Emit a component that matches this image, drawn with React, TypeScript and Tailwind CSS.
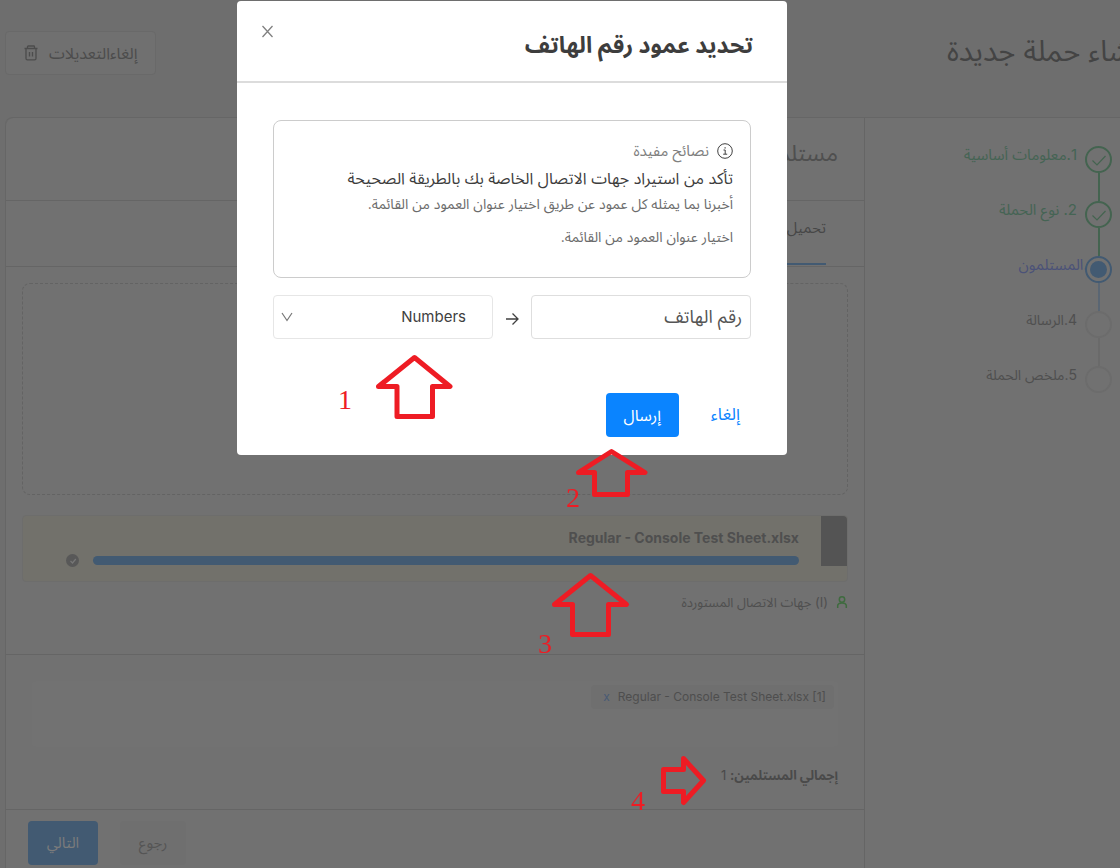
import { useState } from 'react';
import clsx from 'clsx';

const steps = [
  { label: '1.معلومات أساسية', status: 'done' },
  { label: '2. نوع الحملة', status: 'done' },
  { label: '3.المستلمون', status: 'current' },
  { label: '4.الرسالة', status: 'todo' },
  { label: '5.ملخص الحملة', status: 'todo' },
];

const TrashIcon = () => (
  <svg className="h-4 w-4" viewBox="0 0 16 16" fill="none" stroke="currentColor" strokeWidth="1.3">
    <path d="M1.5 3.5h13M4.5 3.5V1.8C4.5 1.3 4.8 1 5.3 1h5.400c.5 0 .8.3.8.8V3.500M3 3.500v9.900c0 .9.500 1.400 1.400 1.400h7.200c.9 0 1.400-.5 1.400-1.400V3.500M6.500 7v4.500M9.500 7v4.500" />
  </svg>
);

const UserIcon = () => (
  <svg className="h-3 w-3 text-[#3f6b3f]" viewBox="0 0 12 12" fill="none" stroke="currentColor" strokeWidth="1.5">
    <circle cx="6" cy="3.500" r="2.700" />
    <path d="M1.700 12V9.800C1.700 8.200 3.200 7 6 7s4.300 1.200 4.300 2.800V12" />
  </svg>
);

const InfoIcon = () => (
  <svg className="h-4 w-4 text-[#404040]" viewBox="0 0 16 16" fill="none" stroke="currentColor" strokeWidth="1">
    <circle cx="8" cy="8" r="7.300" />
    <path d="M6.500 7h1.700v4M6.200 11.200h4" />
    <path d="M7.500 4.800h1.200" strokeWidth="1.300" />
  </svg>
);

const StepCircle = ({ status }: { status: string }) => (
  <span
    className={clsx(
      'relative z-10 flex h-[27px] w-[27px] shrink-0 items-center justify-center rounded-full border-2 bg-[#717171]',
      status === 'done' && 'border-[#446450] text-[#446450]',
      status === 'current' && 'border-[#425a72]',
      status === 'todo' && 'border-[#6c6c6c]',
    )}
  >
    {status === 'done' && (
      <svg className="h-4 w-4" viewBox="0 0 16 16" fill="none" stroke="currentColor" strokeWidth="1.200">
        <path d="M1.500 8.500l4.500 4.500L14.500 4" />
      </svg>
    )}
    {status === 'current' && <span className="h-[17px] w-[17px] rounded-full bg-[#425a72]" />}
  </span>
);

const Stepper = () => (
  <ol className="pr-2 pt-7">
    {steps.map((step, i) => (
      <li key={step.label} className="flex gap-2">
        <div className="flex w-[27px] flex-col items-center">
          <StepCircle status={step.status} />
          {i < steps.length - 1 && (
            <span
              className={clsx(
                'h-7 w-[2px]',
                step.status === 'done' && 'bg-[#446450]',
                step.status === 'current' && 'bg-[#5a6673]',
                step.status === 'todo' && 'bg-[#6a6a6a]',
              )}
            />
          )}
        </div>
        <span
          className={clsx(
            'leading-[18px]',
            step.status === 'done' && 'text-[15px] text-[#456454]',
            step.status === 'current' && '-mr-5 text-[15px] text-[#4b5278]',
            step.status === 'todo' && 'text-[14px] text-[#4f4f4f]',
          )}
        >
          {step.label}
        </span>
      </li>
    ))}
  </ol>
);

const Recipients = () => (
  <main className="flex flex-1 flex-col rounded-tl-lg border-l border-[#666]">
    <div className="flex h-[83px] items-center border-b border-[#656565] px-[26px] pb-3">
      <h2 className="text-[23px] leading-8 text-[#4f4f4f]">مستلمو الحملة</h2>
    </div>

    <div className="flex h-[66px] border-b border-[#656565] px-[38px]">
      <button className="h-16 border-b-2 border-[#425a72] pb-2 text-[15px] text-[#474747]">تحميل ملف</button>
    </div>

    <div className="px-4 pt-4">
      <div className="h-[212px] rounded-lg border border-dashed border-[#636363]" />

      <div className="mt-5 flex h-[67px] items-start rounded border border-[#6d6d6c] bg-[#72716b]">
        <div className="h-[50px] w-[26px] rounded-tr bg-[#545454]" />
        <div className="flex-1 pr-[22px] pt-3">
          <p className="text-[14px] font-bold leading-5 text-[#4f4f4f]">
            <bdi>Regular - Console Test Sheet.xlsx</bdi>
          </p>
          <div className="mt-2 h-[9px] rounded-full bg-[#425a72]" />
        </div>
        <span className="ml-[43px] mr-[14px] mt-[38px] flex h-[13px] w-[13px] items-center justify-center rounded-full bg-[#585858]">
          <svg className="h-2 w-2" viewBox="0 0 8 8" fill="none" stroke="#777" strokeWidth="1.200">
            <path d="M1.500 4l2 2L6.800 2" />
          </svg>
        </span>
      </div>

      <p className="mt-2 flex items-center gap-2 text-[13px] leading-6 text-[#4f4f4f]">
        <UserIcon />
        <span>(I) جهات الاتصال المستوردة</span>
      </p>
    </div>

    <section className="mt-10 h-[156px] border-y border-[#656565] px-[26px] pt-[26px]">
      <div className="h-[66px] rounded bg-[#727272] px-1 pt-1">
        <span className="flex h-6 w-fit items-center gap-2 rounded bg-[#6f6f6f] pl-3 pr-2 text-[12px] text-[#4e4e4e]">
          <bdi>Regular - Console Test Sheet.xlsx [1]</bdi>
          <button className="text-[#485a75]">x</button>
        </span>
      </div>
      <p className="mt-[18px] text-[13px] leading-5 text-[#4a4a4a]">
        <b>إجمالي المستلمين:</b> 1
      </p>
    </section>

    <footer className="flex justify-end gap-[22px] px-[22px] pt-[11px]">
      <button className="h-11 w-[66px] rounded bg-[#6f6f6f] text-[15px] text-[#555]">رجوع</button>
      <button className="h-11 w-[70px] rounded bg-[#425a72] text-[15px] text-[#7c7c7c]">التالي</button>
    </footer>
  </main>
);

const PhoneColumnDialog = () => {
  const [column, setColumn] = useState('Numbers');

  return (
    <div className="fixed inset-0 flex items-start justify-center pr-[96px] pt-px">
      <div role="dialog" aria-labelledby="dialog-title" className="w-[550px] rounded bg-white">
        <header className="flex h-[82px] items-start justify-between border-b-2 border-[#dcdcdc] pl-6 pr-[34px]">
          <h2 id="dialog-title" className="pt-7 text-[23px] font-bold leading-8 text-[#3d3d3d]">
            تحديد عمود رقم الهاتف
          </h2>
          <button aria-label="إغلاق" className="mt-6 text-[#808080]">
            <svg className="h-[13px] w-[13px]" viewBox="0 0 13 13" fill="none" stroke="currentColor" strokeWidth="1.300">
              <path d="M1.500 1l10 11M11.500 1l-10 11" />
            </svg>
          </button>
        </header>

        <div className="px-9 pb-[18px] pt-[37px]">
          <div className="h-[158px] rounded-lg border border-[#ccc] px-[17px] pt-4">
            <p className="flex items-center gap-2 text-[15px] leading-7 text-[#808080]">
              <InfoIcon />
              نصائح مفيدة
            </p>
            <p className="text-[16px] leading-[26px] text-[#3d3d3d]">
              تأكد من استيراد جهات الاتصال الخاصة بك بالطريقة الصحيحة
            </p>
            <p className="text-[14px] leading-[26px] text-[#6b6b6b]">
              أخبرنا بما يمثله كل عمود عن طريق اختيار عنوان العمود من القائمة.
            </p>
            <p className="mt-[7px] text-[14px] leading-[26px] text-[#6b6b6b]">اختيار عنوان العمود من القائمة.</p>
          </div>

          <div className="mt-[17px] grid grid-cols-[1fr_auto_1fr] items-center gap-3">
            <input
              aria-label="رقم الهاتف"
              defaultValue="رقم الهاتف"
              className="h-11 w-full min-w-0 rounded border border-[#dedede] px-2 text-[18px] text-[#555]"
            />
            <svg className="mt-1 h-[14px] w-[14px] text-[#404040]" viewBox="0 0 14 14" fill="none" stroke="currentColor" strokeWidth="1.300">
              <path d="M1 7h12M7.500 1.500L13 7l-5.500 5.500" />
            </svg>
            <div className="relative">
              <select
                aria-label="العمود"
                value={column}
                onChange={(e) => setColumn(e.target.value)}
                className="h-11 w-full appearance-none rounded border border-[#e6e6e6] bg-white pl-8 pr-[26px] text-[15px] text-[#404040]"
              >
                <option>Numbers</option>
              </select>
              <svg className="pointer-events-none absolute left-2 top-4 h-3 w-3 text-[#777]" viewBox="0 0 12 12" fill="none" stroke="currentColor" strokeWidth="1.200">
                <path d="M1 2l5 7.500L11 2" />
              </svg>
            </div>
          </div>

          <div className="mt-[54px] flex gap-8 pr-[11px]">
            <button className="h-11 text-[17px] text-[#0a84ff]">إلغاء</button>
            <button className="h-11 w-[73px] rounded bg-[#0a84ff] text-[16px] text-white">إرسال</button>
          </div>
        </div>
      </div>
    </div>
  );
};

// Numbered pointers drawn over the page
const Pointers = () => (
  <div className="pointer-events-none fixed inset-0 font-['Liberation_Serif',serif] text-[28px] leading-7 text-[#ee1c24]" dir="ltr">
    <svg className="absolute left-0 top-0 h-[868px] w-[1120px]" viewBox="0 0 1120 868" fill="none" stroke="currentColor" strokeWidth="5" strokeLinejoin="round">
      <path d="M414.500 357.500L450 386.500H432.500V416.500H397V386.500H378.500Z" />
      <path d="M611.500 451.500L645 472.500H627.500V494.500H594.500V472.500H578.500Z" />
      <path d="M590.500 575.500L626.500 604.500H608.500V634.500H572.500V604.500H554.500Z" />
      <path d="M663.500 769.500H683.500V758.500L703.500 780.500L683.500 802.500V791.500H663.500Z" />
    </svg>
    <span className="absolute left-[338px] top-[386px]">1</span>
    <span className="absolute left-[566px] top-[484px]">2</span>
    <span className="absolute left-[538px] top-[630px]">3</span>
    <span className="absolute left-[631px] top-[787px]">4</span>
  </div>
);

export default function App() {
  return (
    <div
      dir="rtl"
      className="flex min-h-screen flex-col overflow-hidden bg-[#6e6e6e] font-['Inter','Noto_Sans_Arabic','DejaVu_Sans',sans-serif]"
    >
      <header className="flex h-[117px] items-start justify-between pl-[5px] pt-[31px]">
        <h1 className="-mr-7 text-[29px] leading-10 text-[#444]">إنشاء حملة جديدة</h1>
        <button className="flex h-11 items-center gap-2.5 rounded border border-[#696969] bg-[#707070] px-[17px] text-[16px] text-[#4c4c4c]">
          إلغاءالتعديلات
          <TrashIcon />
        </button>
      </header>

      <div className="ml-[5px] flex flex-1 rounded-tl-lg border-t border-[#666] bg-[#717171]">
        <aside className="w-64 shrink-0 border-l border-[#656565]">
          <Stepper />
        </aside>
        <Recipients />
      </div>

      <PhoneColumnDialog />
      <Pointers />
    </div>
  );
}
